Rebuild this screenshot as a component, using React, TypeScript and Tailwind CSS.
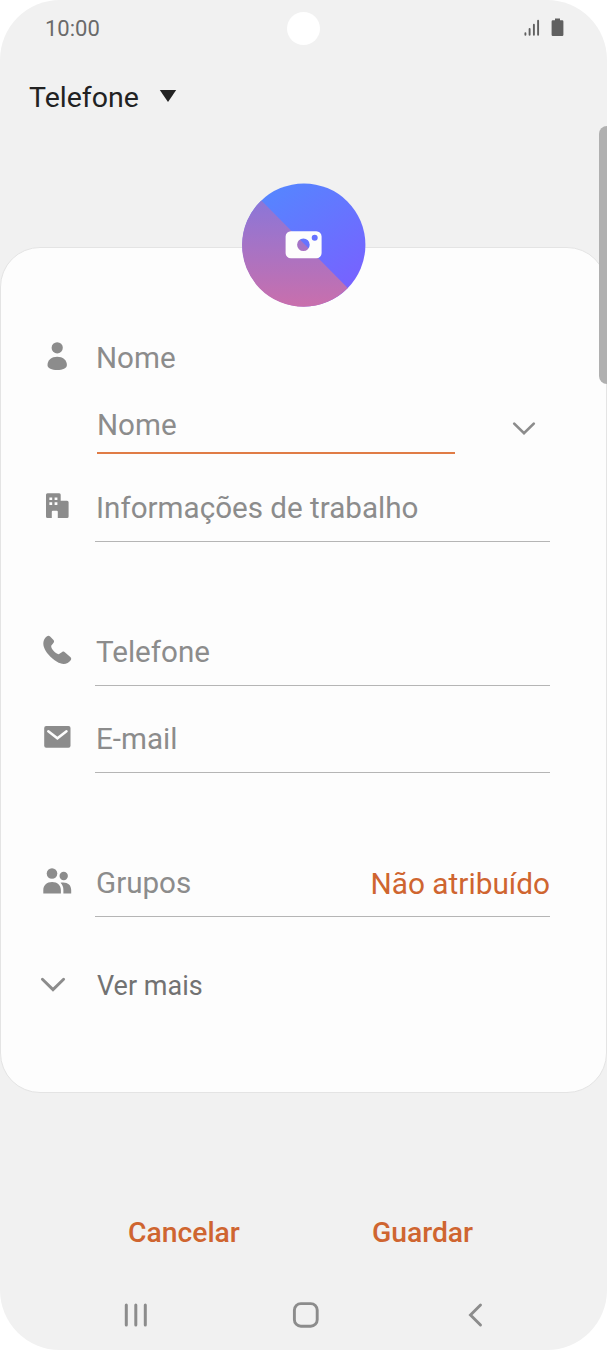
import type { ReactNode } from 'react'

function StatusBar() {
  return (
    <div className="grid h-14 grid-cols-3 items-center pr-[43px] pl-[44px] text-[#6a6a6a]">
      <span className="pt-0.5 pl-px text-[22px] leading-none">10:00</span>
      <span className="size-[33px] justify-self-center rounded-full bg-white" />
      <div className="flex items-center justify-end gap-2.5">
        <svg width="18" height="20" viewBox="0 0 18 20" stroke="#606060" strokeWidth="1.9" strokeLinecap="round">
          <path d="M2.4 15.2v1.6M6.6 11v5.8M10.9 6.7v10.1M15.1 2.7v14.1" />
        </svg>
        <svg width="13" height="20" viewBox="0 0 13 20" fill="#606060">
          <path d="M4 .6h5v1.6h2.2a1.2 1.2 0 0 1 1.2 1.2v13.4a1.2 1.2 0 0 1-1.2 1.2H1.8A1.2 1.2 0 0 1 .6 16.8V3.4a1.2 1.2 0 0 1 1.2-1.2H4z" />
        </svg>
      </div>
    </div>
  )
}

function PhotoButton() {
  return (
    <button className="-mt-[65px] self-center rounded-full" aria-label="Foto">
      <svg className="block overflow-visible" width="124" height="124" viewBox="0 0 124 124">
        <defs>
          <linearGradient id="blue" x1="0.1" y1="0" x2="0.8" y2="1">
            <stop offset="0" stopColor="#5289ff" />
            <stop offset="1" stopColor="#7a5fff" />
          </linearGradient>
          <linearGradient id="pink" x1="0" y1="0" x2="0" y2="1">
            <stop offset="0" stopColor="#8b76d8" />
            <stop offset="1" stopColor="#c96fac" />
          </linearGradient>
        </defs>
        <circle cx="61.9" cy="61.9" r="61.5" fill="url(#blue)" />
        <path d="M19.4 17.5A61.5 61.5 0 1 0 105.7 105.1Z" fill="url(#pink)" />
        <path
          fill="#fdfdfd"
          fillRule="evenodd"
          d="M48.9 48.3h25.4a5.3 5.3 0 0 1 5.3 5.3v16.4a5.3 5.3 0 0 1-5.3 5.3H48.9a5.3 5.3 0 0 1-5.3-5.3V53.6a5.3 5.3 0 0 1 5.3-5.3zM61.4 55.4a6.3 6.3 0 1 0 0 12.6a6.3 6.3 0 1 0 0-12.6zM72.7 51.8a3 3 0 1 0 0 6a3 3 0 1 0 0-6z"
        />
      </svg>
    </button>
  )
}

function Icon({ children }: { children: ReactNode }) {
  return (
    <svg width="32" height="32" viewBox="0 0 32 32" fill="#8c8c8c">
      {children}
    </svg>
  )
}

const personIcon = (
  <Icon>
    <circle cx="16.2" cy="5.8" r="5.6" />
    <path d="M16.2 14.7c5.6 0 9.7 3.5 9.7 8.2 0 3.5-4.3 5-9.7 5s-9.7-1.5-9.7-5c0-4.7 4.1-8.2 9.7-8.2z" />
  </Icon>
)

const buildingIcon = (
  <Icon>
    <path
      fillRule="evenodd"
      d="M6.5 2.3h11.7a1.5 1.5 0 0 1 1.5 1.5v6h6.4a1.5 1.5 0 0 1 1.5 1.5v14.2a1.5 1.5 0 0 1-1.5 1.5h-9.3v-6.2a1 1 0 0 0-1-1h-4a1 1 0 0 0-1 1V27H6.5A1.5 1.5 0 0 1 5 25.5V3.8a1.5 1.5 0 0 1 1.5-1.5zM8.4 6.4v2.7h2.8V6.4zm5.2 0v2.7h2.8V6.4zM8.4 11.2v2.7h2.8v-2.7zm5.2 0v2.7h2.8v-2.7z"
    />
  </Icon>
)

const phoneIcon = (
  <Icon>
    <path d="M5.7 1.5C7 .5 8.1.6 9.1 1.6l3.4 3.5c.8.9.7 1.7.1 2.6l-2.4 3.1c-.4 3 4 7.6 7.5 8.5l3.5-2.3c.9-.6 1.8-.6 2.6.2l5.5 4.9c1.1 1 1.2 2.1.4 3.2-3 4.4-8.8 4.7-13.7 1.5C9.5 22.7 4.6 17.1 2.9 11.9 1.8 8.2 2.3 4.3 5.7 1.5z" />
  </Icon>
)

const mailIcon = (
  <Icon>
    <rect x="3.2" y="4.1" width="26.3" height="21.6" rx="2" />
    <path d="M7.3 9.2l9.1 7.1 9.1-7.1" fill="none" stroke="#fdfdfd" strokeWidth="2.5" strokeLinecap="round" />
  </Icon>
)

const groupIcon = (
  <Icon>
    <circle cx="11" cy="7.5" r="5.3" />
    <circle cx="22.7" cy="10" r="4.2" />
    <path d="M2.3 27.5v-3.3c0-5 3.5-8.2 8.8-8.2s8.8 3.2 8.8 8.2v3.3zM19.5 16.7c6.4-1.2 10.7 1.8 10.7 7.3v3.5h-7.8V24c0-3.2-1-5.4-2.9-7.3z" />
  </Icon>
)

function Chevron({ size = 26, className = '' }: { size?: number; className?: string }) {
  return (
    <svg className={className} width={size} height={size} viewBox="0 0 26 26" fill="none" stroke="#8c8c8c" strokeWidth="2.9" strokeLinecap="round">
      <path d="M2.4 7.2L13 17.6 23.6 7.2" />
    </svg>
  )
}

type FieldProps = { icon: ReactNode; label: string; value?: string; className?: string }

function Field({ icon, label, value, className = '' }: FieldProps) {
  return (
    <div className={`flex h-[69px] ${className}`}>
      <div className="flex h-[68px] w-[66px] items-center pl-3">{icon}</div>
      <div className="flex w-[455px] items-center justify-between border-b border-[#b5b5b5] pt-[3px] pl-px">
        <span>{label}</span>
        {value && <span className="text-[29.8px] text-[#cf6530]">{value}</span>}
      </div>
    </div>
  )
}

function ContactCard() {
  return (
    <div className="flex h-[846px] flex-col rounded-[40px] border border-[#e4e4e4] bg-[#fdfdfd] pl-7 text-[29.6px] leading-none text-[#8c8c8c]">
      <div className="-ml-7 flex justify-center">
        <PhotoButton />
      </div>

      <div className="mt-[21px] flex h-[60px] items-center">
        <div className="flex w-[67px] pl-3">{personIcon}</div>
        <span className="pt-0.5">Nome</span>
      </div>
      <div className="mt-2 flex h-[58px] items-center pl-[68px]">
        <div className="flex h-full w-[358px] items-center border-b-2 border-[#e07c46] pt-1">Nome</div>
        <Chevron size={24} className="mt-2 ml-[57px]" />
      </div>

      <Field icon={buildingIcon} label="Informações de trabalho" className="mt-[19px]" />
      <Field icon={phoneIcon} label="Telefone" className="mt-[75px]" />
      <Field icon={mailIcon} label="E-mail" className="mt-[18px]" />
      <Field icon={groupIcon} label="Grupos" value="Não atribuído" className="mt-[75px]" />

      <div className="mt-[38px] flex h-[60px] items-center pl-[11px] text-[27px] text-[#727272]">
        <Chevron />
        <span className="pt-0.5 pl-[31px]">Ver mais</span>
      </div>
    </div>
  )
}

function NavBar() {
  return (
    <div className="mt-[53px] flex items-center justify-between pr-[117px] pl-[122px]">
      <svg width="28" height="28" viewBox="0 0 28 28" stroke="#8c8c8c" strokeWidth="3" strokeLinecap="round">
        <path d="M4.3 4v20M13.8 4v20M23.3 4v20" />
      </svg>
      <svg width="28" height="28" viewBox="0 0 28 28" fill="none" stroke="#8c8c8c" strokeWidth="2.9">
        <rect x="2.4" y="2.6" width="22.8" height="22.6" rx="6.5" />
      </svg>
      <svg width="28" height="28" viewBox="0 0 28 28" fill="none" stroke="#8c8c8c" strokeWidth="2.9" strokeLinecap="round">
        <path d="M18.5 4L8.5 14 18.5 24" />
      </svg>
    </div>
  )
}

export default function App() {
  return (
    <div className="h-[1350px] w-[607px] bg-white">
      <div className="relative h-full overflow-hidden rounded-[60px] bg-[#f1f1f1] font-['Roboto',sans-serif]">
        <StatusBar />
        <div className="mt-[26px] mb-[133px] flex h-8 items-center pl-[29px] text-[28.5px] leading-none text-[#222]">
          Telefone
          <svg className="mb-1 ml-[20px]" width="18" height="14" viewBox="0 0 18 14" fill="#222">
            <path d="M.8 1h16.4L9 13z" />
          </svg>
        </div>

        <ContactCard />

        <div className="mt-[123px] flex h-8 items-center pt-0.5 pl-[128px] text-[28.3px] leading-none font-medium text-[#cf6530]">
          <button>Cancelar</button>
          <button className="ml-[132px]">Guardar</button>
        </div>
        <NavBar />

        {/* Scroll thumb */}
        <div className="absolute top-[126px] right-0 h-[258px] w-2 rounded-l-lg bg-[#b0b0b0]" />
      </div>
    </div>
  )
}
